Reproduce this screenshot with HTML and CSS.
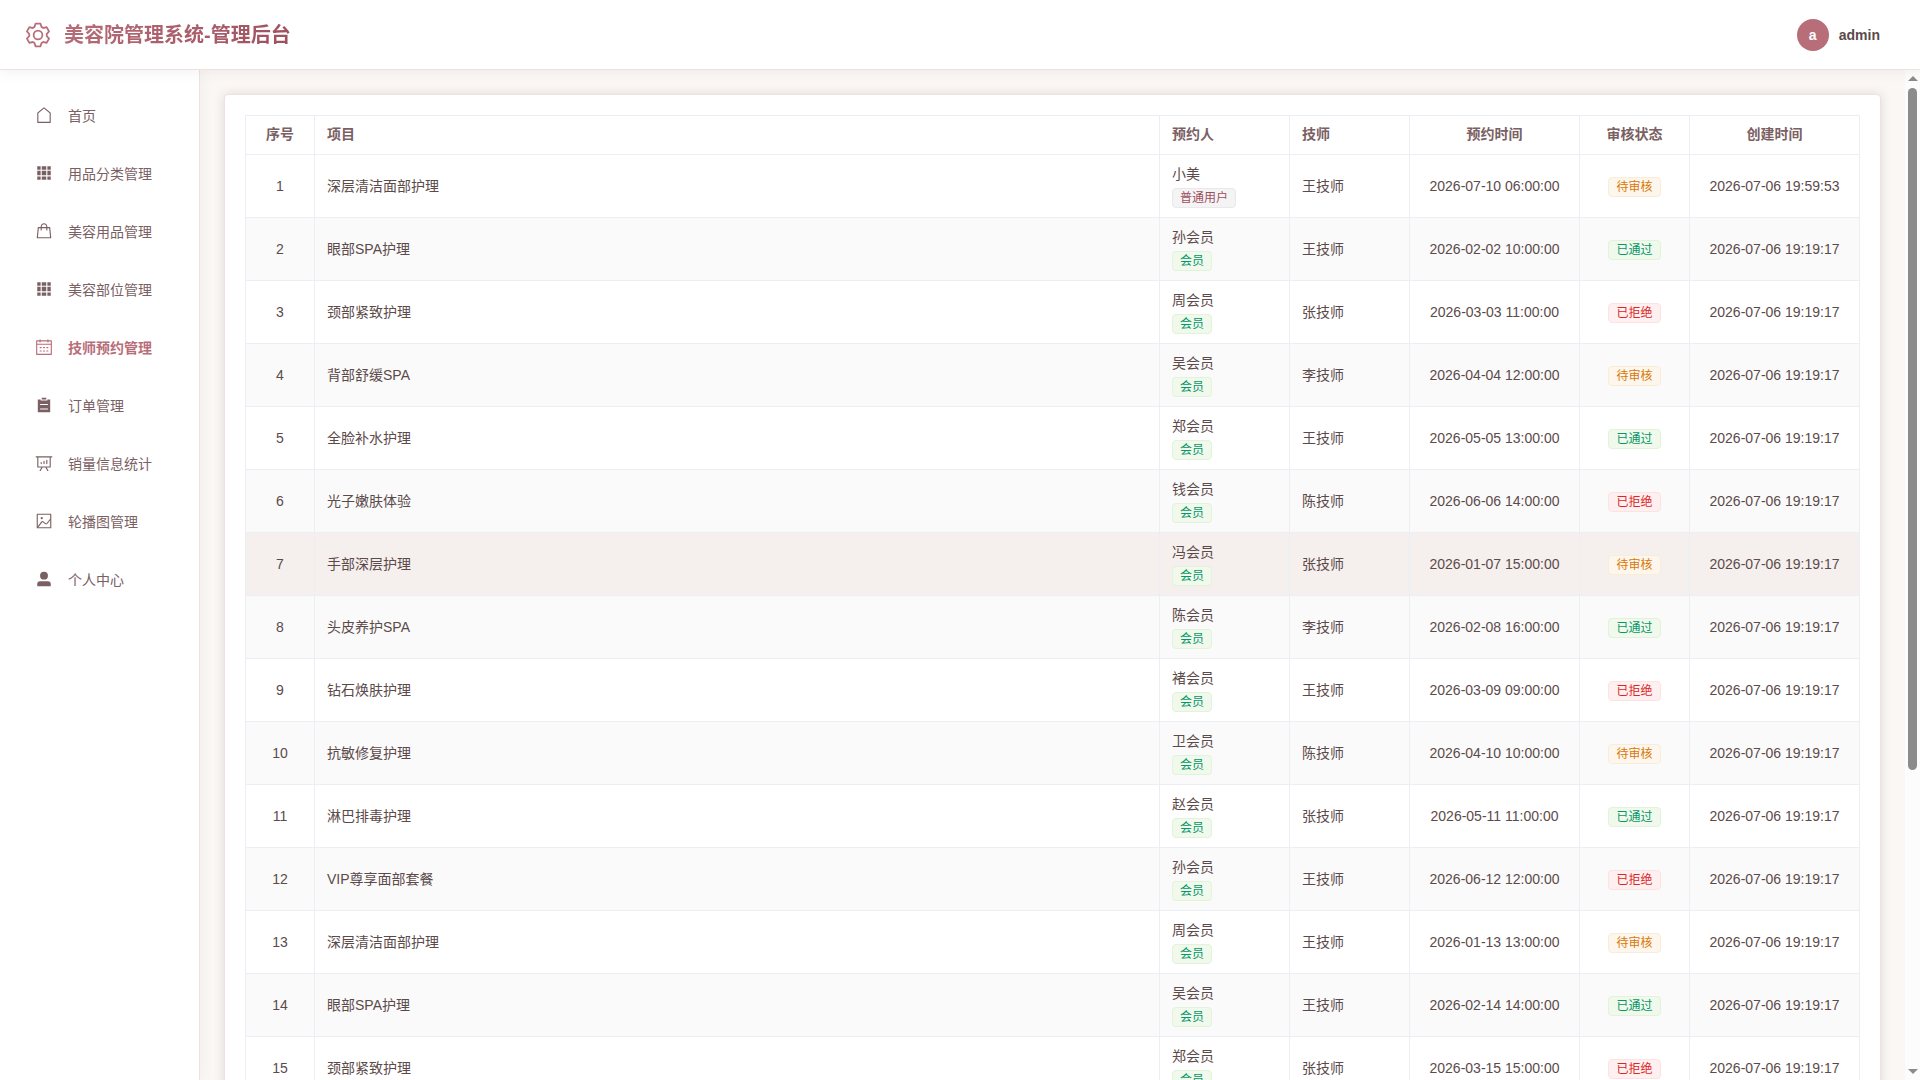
FILE: index.html
```html
<!DOCTYPE html>
<html lang="zh-CN">
<head>
<meta charset="UTF-8">
<meta name="viewport" content="width=device-width, initial-scale=1.0">
<title>美容院管理系统-管理后台</title>
<link rel="stylesheet" href="styles.css">
</head>
<body>
<div class="layout">
  <header class="header">
    <div class="brand">
      <svg class="brand-icon" viewBox="0 0 1024 1024"><path d="M600.704 64a32 32 0 0 1 30.464 22.208l35.2 109.376c14.784 7.232 28.928 15.36 42.432 24.512l112.384-24.192a32 32 0 0 1 34.432 15.36L944.32 364.8a32 32 0 0 1-4.032 37.504l-77.12 85.12a357.12 357.12 0 0 1 0 49.024l77.12 85.248a32 32 0 0 1 4.032 37.504l-88.704 153.6a32 32 0 0 1-34.432 15.296L708.8 803.904c-13.44 9.088-27.648 17.28-42.368 24.512l-35.264 109.376A32 32 0 0 1 600.704 960H423.296a32 32 0 0 1-30.464-22.208L357.696 828.48a351.616 351.616 0 0 1-42.56-24.64l-112.32 24.256a32 32 0 0 1-34.432-15.36L79.68 659.2a32 32 0 0 1 4.032-37.504l77.12-85.248a357.12 357.12 0 0 1 0-48.896l-77.12-85.248A32 32 0 0 1 79.68 364.8l88.704-153.6a32 32 0 0 1 34.432-15.296l112.32 24.256c13.568-9.152 27.776-17.408 42.56-24.64l35.2-109.312A32 32 0 0 1 423.232 64H600.64zm-23.424 64H446.72l-36.352 113.088-24.512 11.968a294.113 294.113 0 0 0-34.816 20.096l-22.656 15.36-116.224-25.088-65.28 113.152 79.68 88.192-1.92 27.136a293.12 293.12 0 0 0 0 40.192l1.92 27.136-79.808 88.192 65.344 113.152 116.224-25.024 22.656 15.296a294.113 294.113 0 0 0 34.816 20.096l24.512 11.968L446.72 896h130.688l36.48-113.152 24.448-11.904a288.282 288.282 0 0 0 34.752-20.096l22.592-15.296 116.288 25.024 65.28-113.152-79.744-88.192 1.92-27.136a293.12 293.12 0 0 0 0-40.256l-1.92-27.136 79.808-88.128-65.344-113.152-116.288 24.96-22.592-15.232a287.616 287.616 0 0 0-34.752-20.096l-24.448-11.904L577.344 128zM512 320a192 192 0 1 1 0 384 192 192 0 0 1 0-384m0 64a128 128 0 1 0 0 256 128 128 0 0 0 0-256"/></svg>
      <h1 class="brand-title">美容院管理系统-管理后台</h1>
    </div>
    <div class="user">
      <span class="avatar">a</span>
      <span class="user-name">admin</span>
    </div>
  </header>

  <div class="body">
    <nav class="sidebar">
      <a class="menu-item" href="#">
        <svg class="menu-icon" viewBox="0 0 1024 1024"><path d="M192 413.952V896h640V413.952L512 147.328zM139.52 374.4l352-293.312a32 32 0 0 1 40.96 0l352 293.312A32 32 0 0 1 896 398.976V928a32 32 0 0 1-32 32H160a32 32 0 0 1-32-32V398.976a32 32 0 0 1 11.52-24.576z"/></svg>
        <span>首页</span>
      </a>
      <a class="menu-item" href="#">
        <svg class="menu-icon" viewBox="0 0 1024 1024"><path d="M640 384v256H384V384zm64 0h192v256H704zm-64 512H384V704h256zm64 0V704h192v192zm-64-768v192H384V128zm64 0h192v192H704zM320 384v256H128V384zm0 512H128V704h192zm0-768v192H128V128z"/></svg>
        <span>用品分类管理</span>
      </a>
      <a class="menu-item" href="#">
        <svg class="menu-icon" viewBox="0 0 1024 1024"><path d="M320 288v-22.336C320 154.688 405.504 64 512 64s192 90.688 192 201.664v22.4h131.072a32 32 0 0 1 31.808 28.8l57.6 576a32 32 0 0 1-31.808 35.2H131.328a32 32 0 0 1-31.808-35.2l57.6-576a32 32 0 0 1 31.808-28.8H320zm64 0h256v-22.336C640 189.248 582.272 128 512 128c-70.272 0-128 61.248-128 137.664v22.4zm-64 64H217.92l-51.2 512h690.56l-51.264-512H704v96a32 32 0 1 1-64 0v-96H384v96a32 32 0 0 1-64 0z"/></svg>
        <span>美容用品管理</span>
      </a>
      <a class="menu-item" href="#">
        <svg class="menu-icon" viewBox="0 0 1024 1024"><path d="M640 384v256H384V384zm64 0h192v256H704zm-64 512H384V704h256zm64 0V704h192v192zm-64-768v192H384V128zm64 0h192v192H704zM320 384v256H128V384zm0 512H128V704h192zm0-768v192H128V128z"/></svg>
        <span>美容部位管理</span>
      </a>
      <a class="menu-item active" href="#">
        <svg class="menu-icon" viewBox="0 0 1024 1024"><path d="M128 384v512h768V192H768v32a32 32 0 1 1-64 0v-32H320v32a32 32 0 0 1-64 0v-32H128v128h768v64zm192-256h384V96a32 32 0 1 1 64 0v32h160a32 32 0 0 1 32 32v768a32 32 0 0 1-32 32H96a32 32 0 0 1-32-32V160a32 32 0 0 1 32-32h160V96a32 32 0 0 1 64 0zm-32 384h64a32 32 0 0 1 0 64h-64a32 32 0 0 1 0-64m0 192h64a32 32 0 1 1 0 64h-64a32 32 0 1 1 0-64m192-192h64a32 32 0 0 1 0 64h-64a32 32 0 0 1 0-64m0 192h64a32 32 0 1 1 0 64h-64a32 32 0 1 1 0-64m192-192h64a32 32 0 1 1 0 64h-64a32 32 0 1 1 0-64m0 192h64a32 32 0 1 1 0 64h-64a32 32 0 1 1 0-64"/></svg>
        <span>技师预约管理</span>
      </a>
      <a class="menu-item" href="#">
        <svg class="menu-icon" viewBox="0 0 1024 1024"><path d="M704 192h160v736H160V192h160v64h384zM288 512h448v-64H288zm0 256h448v-64H288zm96-576V96h256v96z"/></svg>
        <span>订单管理</span>
      </a>
      <a class="menu-item" href="#">
        <svg class="menu-icon" viewBox="0 0 1024 1024"><path d="m665.216 768 110.848 192h-73.856L591.36 768H433.024L322.176 960H248.32l110.848-192H160a32 32 0 0 1-32-32V192H64a32 32 0 0 1 0-64h896a32 32 0 1 1 0 64h-64v544a32 32 0 0 1-32 32zM832 192H192v512h640zM352 448a32 32 0 0 1 32 32v64a32 32 0 0 1-64 0v-64a32 32 0 0 1 32-32m160-64a32 32 0 0 1 32 32v128a32 32 0 0 1-64 0V416a32 32 0 0 1 32-32m160-64a32 32 0 0 1 32 32v192a32 32 0 1 1-64 0V352a32 32 0 0 1 32-32"/></svg>
        <span>销量信息统计</span>
      </a>
      <a class="menu-item" href="#">
        <svg class="menu-icon" viewBox="0 0 1024 1024"><path d="M160 160v704h704V160zm-32-64h768a32 32 0 0 1 32 32v768a32 32 0 0 1-32 32H128a32 32 0 0 1-32-32V128a32 32 0 0 1 32-32"/><path d="M384 288q64 0 64 64t-64 64q-64 0-64-64t64-64M185.408 876.992l-50.816-38.912L350.72 556.032a96 96 0 0 1 134.592-17.856l1.856 1.472 122.88 99.136a32 32 0 0 0 44.992-4.864l216-269.888 49.92 39.936-215.808 269.824-.256.32a96 96 0 0 1-135.04 14.464l-122.88-99.072-.64-.512a32 32 0 0 0-44.8 5.952z"/></svg>
        <span>轮播图管理</span>
      </a>
      <a class="menu-item" href="#">
        <svg class="menu-icon" viewBox="0 0 1024 1024"><path d="M288 320a224 224 0 1 0 448 0 224 224 0 1 0-448 0m544 608H160a32 32 0 0 1-32-32v-96a160 160 0 0 1 160-160h448a160 160 0 0 1 160 160v96a32 32 0 0 1-32 32z"/></svg>
        <span>个人中心</span>
      </a>
    </nav>

    <main class="main">
      <div class="card">
        <table class="table">
          <colgroup>
            <col class="col-index">
            <col>
            <col class="col-user">
            <col class="col-staff">
            <col class="col-time">
            <col class="col-status">
            <col class="col-time">
          </colgroup>
          <thead>
            <tr>
              <th class="center">序号</th>
              <th>项目</th>
              <th>预约人</th>
              <th>技师</th>
              <th class="center">预约时间</th>
              <th class="center">审核状态</th>
              <th class="center">创建时间</th>
            </tr>
          </thead>
          <tbody id="rows"></tbody>
        </table>
      </div>
    </main>

    <div class="scrollbar" aria-hidden="true">
      <span class="arrow up"></span>
      <div class="track"><div class="thumb"></div></div>
      <span class="arrow down"></span>
    </div>
  </div>
</div>

<script src="script.js"></script>
</body>
</html>
```

FILE: styles.css
```css
* {
  box-sizing: border-box;
}

body {
  margin: 0;
  font-family: "Liberation Sans", "Noto Sans CJK SC", sans-serif;
  font-size: 14px;
  color: #5c4a4a;
  background: #faf7f5;
}

.layout {
  display: flex;
  flex-direction: column;
  height: 100vh;
  overflow: hidden;
}

/* header */
.header {
  position: relative;
  z-index: 2;
  display: flex;
  flex-shrink: 0;
  align-items: center;
  justify-content: space-between;
  height: 70px;
  padding: 0 40px 0 24px;
  background: #fff;
  border-bottom: 1px solid #f0e0de;
  box-shadow: 0 2px 12px rgba(92, 74, 74, 0.08);
}

.brand {
  display: flex;
  align-items: center;
  gap: 12px;
}

.brand-icon {
  width: 28px;
  height: 28px;
  fill: #b76e79;
}

.brand-title {
  margin: 0;
  font-size: 20px;
  font-weight: bold;
  line-height: 28px;
  color: transparent;
  background: linear-gradient(135deg, #b76e79, #9e4f5e);
  background-clip: text;
  -webkit-background-clip: text;
}

.user {
  display: flex;
  align-items: center;
  gap: 10px;
  font-weight: bold;
}

.avatar {
  display: flex;
  align-items: center;
  justify-content: center;
  width: 32px;
  height: 32px;
  border-radius: 50%;
  color: #fff;
  background: #b76e79;
}

.body {
  display: flex;
  flex: 1;
  min-height: 0;
}

/* sidebar */
.sidebar {
  position: relative;
  z-index: 1;
  flex-shrink: 0;
  width: 200px;
  padding-top: 16px;
  background: #fff;
  border-right: 1px solid #f0e0de;
  box-shadow: 2px 0 12px rgba(92, 74, 74, 0.05);
}

.menu-item {
  display: flex;
  align-items: center;
  gap: 15px;
  height: 50px;
  margin: 4px 12px 8px;
  padding: 0 23px;
  color: #7a6063;
  text-decoration: none;
}

.menu-item.active {
  color: #b76e79;
  font-weight: bold;
}

.menu-icon {
  width: 18px;
  height: 18px;
  fill: currentColor;
}

/* content */
.main {
  flex: 1;
  min-width: 0;
  padding: 24px;
  overflow-y: auto;
  scrollbar-width: none;
}

.card {
  padding: 20px;
  background: #fff;
  border: 1px solid #f0e0de;
  border-radius: 4px;
  box-shadow: 0 0 12px rgba(0, 0, 0, 0.12);
}

.table {
  width: 100%;
  table-layout: fixed;
  border-collapse: separate;
  border-spacing: 0;
  border-top: 1px solid #ebeef5;
  border-left: 1px solid #ebeef5;
}

.col-index {
  width: 69px;
}

.col-user {
  width: 130px;
}

.col-staff {
  width: 120px;
}

.col-time {
  width: 170px;
}

.col-status {
  width: 110px;
}

.table th,
.table td {
  padding: 8px 12px;
  line-height: 23px;
  text-align: left;
  border-right: 1px solid #ebeef5;
  border-bottom: 1px solid #ebeef5;
}

.table th {
  padding-top: 7px;
  color: #7a6063;
}

.table .center {
  text-align: center;
}

.table tbody tr:nth-child(even) {
  background: #fafafa;
}

.table tbody tr.current {
  background: #f5efed;
}

.person {
  display: flex;
  flex-direction: column;
  align-items: flex-start;
  gap: 2px;
  padding-bottom: 1px;
}

.tag {
  display: inline-block;
  padding: 0 7px;
  font-size: 12px;
  line-height: 18px;
  border: 1px solid;
  border-radius: 4px;
  vertical-align: middle;
}

.tag-info {
  color: #9e4f5e;
  background: #f4f4f5;
  border-color: #e9e9eb;
}

.tag-success {
  color: #059669;
  background: #f0f9eb;
  border-color: #e1f3d8;
}

.tag-warning {
  color: #d97706;
  background: #fdf6ec;
  border-color: #faecd8;
}

.tag-danger {
  color: #dc2626;
  background: #fef0f0;
  border-color: #fde2e2;
}

/* scrollbar */
.scrollbar {
  display: flex;
  flex-direction: column;
  flex-shrink: 0;
  align-items: center;
  justify-content: space-between;
  width: 15px;
  padding: 6px 0;
  background: #fcfcfc;
}

.arrow {
  border: 5px solid transparent;
}

.arrow.up {
  border-top: 0;
  border-bottom-color: #8b8b8b;
}

.arrow.down {
  border-bottom: 0;
  border-top-color: #8b8b8b;
}

.track {
  flex: 1;
  width: 9px;
  margin: 7px 0;
}

.thumb {
  height: 70%;
  border-radius: 5px;
  background: #8b8b8b;
}
```

FILE: script.js
```js
var statusTypes = {
  "待审核": "warning",
  "已通过": "success",
  "已拒绝": "danger"
};

var created = "2026-07-06 19:19:17";

var bookings = [
  ["深层清洁面部护理", "小美", "王技师", "2026-07-10 06:00:00", "待审核", "2026-07-06 19:59:53"],
  ["眼部SPA护理", "孙会员", "王技师", "2026-02-02 10:00:00", "已通过", created],
  ["颈部紧致护理", "周会员", "张技师", "2026-03-03 11:00:00", "已拒绝", created],
  ["背部舒缓SPA", "吴会员", "李技师", "2026-04-04 12:00:00", "待审核", created],
  ["全脸补水护理", "郑会员", "王技师", "2026-05-05 13:00:00", "已通过", created],
  ["光子嫩肤体验", "钱会员", "陈技师", "2026-06-06 14:00:00", "已拒绝", created],
  ["手部深层护理", "冯会员", "张技师", "2026-01-07 15:00:00", "待审核", created],
  ["头皮养护SPA", "陈会员", "李技师", "2026-02-08 16:00:00", "已通过", created],
  ["钻石焕肤护理", "褚会员", "王技师", "2026-03-09 09:00:00", "已拒绝", created],
  ["抗敏修复护理", "卫会员", "陈技师", "2026-04-10 10:00:00", "待审核", created],
  ["淋巴排毒护理", "赵会员", "张技师", "2026-05-11 11:00:00", "已通过", created],
  ["VIP尊享面部套餐", "孙会员", "王技师", "2026-06-12 12:00:00", "已拒绝", created],
  ["深层清洁面部护理", "周会员", "王技师", "2026-01-13 13:00:00", "待审核", created],
  ["眼部SPA护理", "吴会员", "王技师", "2026-02-14 14:00:00", "已通过", created],
  ["颈部紧致护理", "郑会员", "张技师", "2026-03-15 15:00:00", "已拒绝", created]
];

function tag(text, type) {
  return '<span class="tag tag-' + type + '">' + text + '</span>';
}

document.getElementById("rows").innerHTML = bookings.map(function(b, i) {
  var level = b[1] === "小美" ? tag("普通用户", "info") : tag("会员", "success");
  return '<tr' + (i === 6 ? ' class="current"' : '') + '>' +
    '<td class="center">' + (i + 1) + '</td>' +
    '<td>' + b[0] + '</td>' +
    '<td><div class="person"><span>' + b[1] + '</span>' + level + '</div></td>' +
    '<td>' + b[2] + '</td>' +
    '<td class="center">' + b[3] + '</td>' +
    '<td class="center">' + tag(b[4], statusTypes[b[4]]) + '</td>' +
    '<td class="center">' + b[5] + '</td>' +
    '</tr>';
}).join("");
```
